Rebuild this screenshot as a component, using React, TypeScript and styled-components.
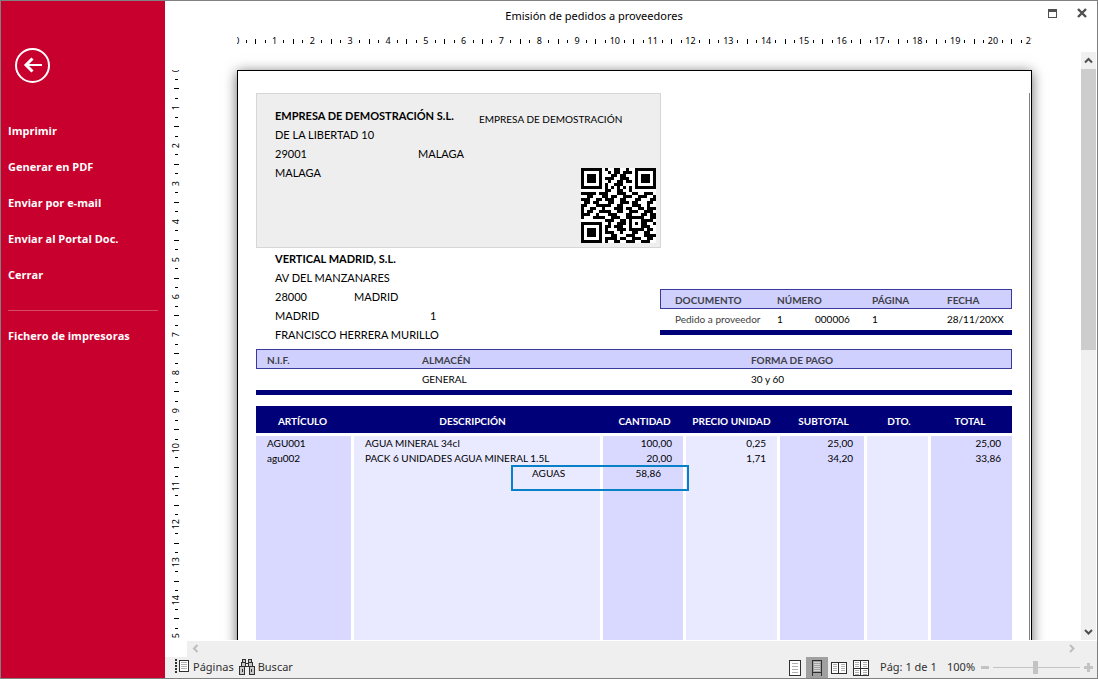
import React from "react";
import styled, { createGlobalStyle } from "styled-components";

const UI = '"Noto Sans", "Open Sans", sans-serif';
const DOC = 'Lato, "Open Sans", sans-serif';
const NAVY = "#000078";

const Global = createGlobalStyle`
  * { box-sizing: border-box; }
  body { margin: 0; background: #fff; font-family: ${UI}; font-size: 11px; color: #000; }
  button { font: inherit; color: inherit; border: 0; padding: 0; background: none; cursor: pointer; }
`;

const Window = styled.div`
  display: flex;
  height: 100vh;
  border: 1px solid #808080;
  overflow: hidden;
`;

/* ---------- sidebar ---------- */
const Sidebar = styled.nav`
  flex: 0 0 164px;
  background: #c8002e;
  color: #fff;
  padding: 46px 7px 0 7px;
`;
const BackButton = styled.button`
  display: block;
  width: 36px;
  height: 36px;
  margin: 0 0 29px 7px;
  svg { display: block; }
`;
const MenuItem = styled.button`
  display: block;
  width: 100%;
  height: 36px;
  text-align: left;
  font-weight: 700;
  font-size: 11px;
  font-family: "Open Sans", sans-serif;
  white-space: nowrap;
`;
const Divider = styled.hr`
  border: 0;
  border-top: 1px solid #d84a68;
  margin: 18px 0 6px;
`;

/* ---------- main ---------- */
const Main = styled.main`
  flex: 1;
  min-width: 0;
  display: flex;
  flex-direction: column;
`;
const TitleBar = styled.header`
  display: flex;
  height: 30px;
`;
const Title = styled.h1`
  flex: 1;
  margin: 0;
  font-size: 11px;
  line-height: 30px;
  font-weight: 400;
  text-align: center;
`;
const WindowButtons = styled.div`
  flex: 0 0 74px;
  display: flex;
  justify-content: flex-end;
  align-items: center;
  gap: 20px;
  padding: 0 10px 7px 0;
  button { height: 12px; }
  svg { display: block; }
`;
const HRuler = styled.div`
  height: 21px;
  margin: 0 65px 0 72px;
  overflow: hidden;
`;
const HTrack = styled.div`
  display: flex;
  height: 100%;
  margin: 0 -4px 0 -5px;
`;
const HCell = styled.div`
  flex: 1 1 0;
  width: 0;
  display: flex;
  justify-content: center;
  align-items: center;
  font-size: 9px;
  line-height: 12px;
  span { padding-bottom: 2px; }
`;
const HTick = styled.i<{ $long?: boolean }>`
  flex: none;
  width: 1px;
  height: ${(p) => (p.$long ? 5 : 3)}px;
  background: #000;
`;
const Body = styled.div`
  flex: 1;
  min-height: 0;
  display: flex;
`;
const VRuler = styled.div`
  flex: 0 0 22px;
  margin-top: 18px;
  overflow: hidden;
`;
const VTrack = styled.div`
  display: flex;
  flex-direction: column;
  height: 1126px;
  margin-top: -5px;
`;
const VCell = styled.div`
  flex: 1 1 0;
  height: 0;
  display: flex;
  justify-content: center;
  align-items: center;
  font-size: 9px;
  line-height: 12px;
  span { writing-mode: vertical-rl; transform: rotate(180deg); }
`;
const VTick = styled.i<{ $long?: boolean }>`
  height: 1px;
  width: ${(p) => (p.$long ? 5 : 3)}px;
  background: #000;
`;
const Canvas = styled.div`
  flex: 1;
  min-width: 0;
  overflow: hidden;
  padding: 18px 49px 0 50px;
`;
const VScroll = styled.div`
  flex: 0 0 15px;
  margin-right: 1px;
  display: flex;
  flex-direction: column;
  background: #f0f0f0;
`;
const ScrollButton = styled.button`
  flex: 0 0 17px;
  display: flex;
  align-items: center;
  justify-content: center;
`;
const Thumb = styled.div`
  flex: 0 0 281px;
  margin-bottom: auto;
  background: #cdcdcd;
`;
const HScroll = styled.div`
  flex: 0 0 16px;
  display: flex;
  justify-content: space-between;
  margin: 1px 0 0 22px;
  padding: 0 17px 1px 0;
  background: #efefef;
`;

/* ---------- sheet ---------- */
const Paper = styled.article`
  border: 1px solid #000;
  height: 1123px;
  background: #fff;
  box-shadow: 0 2px 12px rgba(0, 0, 0, 0.6);
  padding: 22px 1px 0 18px;
  font-family: ${DOC};
`;
const Printable = styled.div`
  height: 100%;
  padding-right: 17px;
  border-right: 1px solid #808080;
`;
const Company = styled.section`
  display: flex;
  width: 405px;
  height: 155px;
  padding: 12px 4px 4px 18px;
  border: 1px solid #d6d6d6;
  background: #eeeeee;
`;
const Side = styled.div`
  flex: 1;
  display: flex;
  flex-direction: column;
  justify-content: space-between;
  align-items: flex-end;
  svg { display: block; }
`;
const SideName = styled.div`
  width: 177px;
  font-size: 10px;
  line-height: 27px;
  white-space: nowrap;
`;
const Lines = styled.div`
  width: 200px;
  font-size: 11px;
  line-height: 19px;
  white-space: nowrap;
`;
const Line = styled.div<{ $first?: number; $bold?: boolean }>`
  display: grid;
  grid-template-columns: ${(p) => (p.$first ? `${p.$first}px` : "auto")} 1fr;
  font-weight: ${(p) => (p.$bold ? 700 : 400)};
`;
const Middle = styled.div`
  display: flex;
  justify-content: space-between;
  height: 101px;
  padding-top: 1px;
  > ${Lines} { margin-left: 19px; }
`;
const DocInfo = styled.section`
  width: 352px;
  padding-top: 40px;
`;
const HeadBand = styled.div<{ $cols: string }>`
  display: grid;
  grid-template-columns: ${(p) => p.$cols};
  height: 20px;
  border: 1px solid #3a3a9c;
  background: #d0d0ff;
  color: #404048;
  font-weight: 700;
  font-size: 10px;
  line-height: 20px;
  white-space: nowrap;
`;
const ValueBand = styled.div<{ $cols: string }>`
  display: grid;
  grid-template-columns: ${(p) => p.$cols};
  height: 21px;
  padding: 0 1px;
  font-size: 10px;
  line-height: 20px;
  white-space: nowrap;
`;
const Muted = styled.span`
  color: #404040;
`;
const Rule = styled.div`
  height: 5px;
  background: ${NAVY};
`;
const Terms = styled.section`
  margin-bottom: 11px;
`;
const Items = styled.table`
  width: 100%;
  table-layout: fixed;
  border-collapse: separate;
  border-spacing: 0;
  font-size: 10px;
  line-height: 15px;
  white-space: nowrap;
`;
const Th = styled.th<{ $pad?: number }>`
  height: 30px;
  padding: 4px ${(p) => p.$pad ?? 0}px 0 0;
  background: ${NAVY};
  border-bottom: 3px solid #fff;
  color: #fff;
  font-size: 10px;
  font-weight: 700;
`;
const Td = styled.td<{ $num?: boolean; $dark?: boolean; $indent?: boolean }>`
  height: 15px;
  padding: 0 11px;
  text-align: ${(p) => (p.$num ? "right" : "left")};
  background: ${(p) => (p.$dark ? "#d9d9ff" : "#e9e9ff")};
  border-right: 3px solid #fff;
  &:last-child { border-right: 0; }
  ${(p) => p.$indent && (p.$num ? "padding-right: 22px;" : "padding-left: 178px; position: relative;")}
`;
const Fill = styled.tr`
  td { height: 420px; }
`;
const Highlight = styled.div`
  position: absolute;
  left: 157px;
  top: -1px;
  width: 178px;
  height: 26px;
  border: 2px solid #0880c8;
`;

/* ---------- status bar ---------- */
const Status = styled.footer`
  flex: 0 0 21px;
  display: flex;
  align-items: center;
  background: #efefef;
  color: #303030;
  padding: 0 4px 0 9px;
  white-space: nowrap;
  svg { display: block; flex: none; }
`;
const StatusButton = styled.button`
  display: flex;
  align-items: center;
  gap: 3px;
  margin-right: 5px;
  padding-bottom: 2px;
`;
const Spacer = styled.div`
  flex: 1;
`;
const ViewButton = styled.button<{ $on?: boolean }>`
  width: 22px;
  height: 21px;
  display: flex;
  align-items: center;
  justify-content: center;
  background: ${(p) => (p.$on ? "#a0a0a0" : "none")};
`;
const StatusText = styled.span<{ $w: number }>`
  width: ${(p) => p.$w}px;
  padding-bottom: 2px;
`;
const PageCount = styled(StatusText)`
  padding-left: 8px;
`;
const Zoom = styled.input`
  appearance: none;
  width: 87px;
  height: 14px;
  margin: 0 4px;
  background: linear-gradient(#c3c3c3, #c3c3c3) center / 100% 1px no-repeat;
  &::-webkit-slider-thumb {
    appearance: none;
    width: 5px;
    height: 13px;
    background: #c3c3c3;
  }
`;

const QR_ROWS = [
  "1111111010011001001111111",
  "1000001001011011101000001",
  "1011101000110110001011101",
  "1011101011100111001011101",
  "1011101001001101101011101",
  "1000001010011100001000001",
  "1111111010101010101111111",
  "0000000011001100100000000",
  "1111101110001110011001110",
  "0011000110110011100111001",
  "1110011011100110001100011",
  "0110110001100111011000110",
  "1100011111001100011100100",
  "1001100100011101100110111",
  "1011001111001100111001110",
  "1110010001110001100011011",
  "1000111100111001111110011",
  "0000000011100110100011110",
  "1111111001001110101011001",
  "1000001011011100100011100",
  "1011101010001110111110110",
  "1011101011100100011001100",
  "1011101000110001110001111",
  "1000001011110110011100110",
  "1111111010011001110011100",
];
const QrCode = () => (
  <svg width="75" height="75" viewBox="0 0 25 25" shapeRendering="crispEdges" aria-label="QR">
    <rect width="25" height="25" fill="#fff" />
    {QR_ROWS.map((row, y) =>
      [...row].map((c, x) => (c === "1" ? <rect key={`${x}-${y}`} x={x} y={y} width="1" height="1" /> : null))
    )}
  </svg>
);

const Chevron = ({ d, color = "#505050" }: { d: string; color?: string }) => (
  <svg width="9" height="9" viewBox="0 0 9 9">
    <path d={d} fill="none" stroke={color} strokeWidth="2" />
  </svg>
);

const PageLines = ({ x, y, w, n }: { x: number; y: number; w: number; n: number }) => (
  <path
    d={Array.from({ length: n }, (_, i) => `M${x} ${y + i * 2 + 0.5}h${w}`).join("")}
    stroke="#b0b0b0"
    fill="none"
  />
);
const PAGE = { fill: "#fff", stroke: "#303030" };

const ticks = Array.from({ length: 85 }, (_, i) => i);
const vticks = Array.from({ length: 119 }, (_, i) => i);
const menu = ["Imprimir", "Generar en PDF", "Enviar por e-mail", "Enviar al Portal Doc.", "Cerrar"];
const headings: [string, number?][] = [
  ["ARTÍCULO", 5],
  ["DESCRIPCIÓN", 12],
  ["CANTIDAD"],
  ["PRECIO UNIDAD", 3],
  ["SUBTOTAL"],
  ["DTO."],
  ["TOTAL", 3],
];
const rows = [
  ["AGU001", "AGUA MINERAL 34cl", "100,00", "0,25", "25,00", "", "25,00"],
  ["agu002", "PACK 6 UNIDADES AGUA MINERAL 1.5L", "20,00", "1,71", "34,20", "", "33,86"],
];

export default function App() {
  return (
    <>
      <Global />
      <Window>
        <Sidebar>
          <BackButton aria-label="Volver">
            <svg width="36" height="36" viewBox="0 0 36 36" fill="none" stroke="#fff">
              <circle cx="17.5" cy="18.5" r="16.5" strokeWidth="2" />
              <path d="M10.5 18H27" strokeWidth="2" />
              <path d="M17.5 11.5L11 18L17.5 24.5" strokeWidth="3" />
            </svg>
          </BackButton>
          {menu.map((m) => (
            <MenuItem key={m}>{m}</MenuItem>
          ))}
          <Divider />
          <MenuItem>Fichero de impresoras</MenuItem>
        </Sidebar>

        <Main>
          <TitleBar>
            <Title>Emisión de pedidos a proveedores</Title>
            <WindowButtons>
              <button aria-label="Maximizar">
                <svg width="9" height="12" viewBox="0 0 9 12" shapeRendering="crispEdges">
                  <path d="M0.5 2V10.5H8.5V2" fill="none" stroke="#505050" />
                  <rect y="2" width="9" height="3" fill="#505050" />
                </svg>
              </button>
              <button aria-label="Cerrar ventana">
                <svg width="10" height="12" viewBox="0 0 10 12">
                  <path d="M1 2L9 10M9 2L1 10" stroke="#505050" strokeWidth="2.4" />
                </svg>
              </button>
            </WindowButtons>
          </TitleBar>

          <HRuler>
            <HTrack>
              {ticks.map((i) => (
                <HCell key={i}>{i % 4 === 0 ? <span>{i / 4}</span> : <HTick $long={i % 4 === 2} />}</HCell>
              ))}
            </HTrack>
          </HRuler>

          <Body>
            <VRuler>
              <VTrack>
                {vticks.map((i) => (
                  <VCell key={i}>{i % 4 === 0 ? <span>{i / 4}</span> : <VTick $long={i % 4 === 2} />}</VCell>
                ))}
              </VTrack>
            </VRuler>

            <Canvas>
              <Paper>
                <Printable>
                  <Company>
                    <Lines>
                      <Line $bold>EMPRESA DE DEMOSTRACIÓN S.L.</Line>
                      <Line>DE LA LIBERTAD 10</Line>
                      <Line $first={143}>
                        <span>29001</span>
                        <span>MALAGA</span>
                      </Line>
                      <Line>MALAGA</Line>
                    </Lines>
                    <Side>
                      <SideName>EMPRESA DE DEMOSTRACIÓN</SideName>
                      <QrCode />
                    </Side>
                  </Company>

                  <Middle>
                    <Lines>
                      <Line $bold>VERTICAL MADRID, S.L.</Line>
                      <Line>AV DEL MANZANARES</Line>
                      <Line $first={79}>
                        <span>28000</span>
                        <span>MADRID</span>
                      </Line>
                      <Line $first={155}>
                        <span>MADRID</span>
                        <span>1</span>
                      </Line>
                      <Line>FRANCISCO HERRERA MURILLO</Line>
                    </Lines>
                    <DocInfo>
                      <HeadBand $cols="14px 102px 95px 75px 1fr">
                        <span />
                        <span>DOCUMENTO</span>
                        <span>NÚMERO</span>
                        <span>PÁGINA</span>
                        <span>FECHA</span>
                      </HeadBand>
                      <ValueBand $cols="14px 102px 38px 57px 75px 1fr">
                        <span />
                        <Muted>Pedido a proveedor</Muted>
                        <span>1</span>
                        <span>000006</span>
                        <span>1</span>
                        <span>28/11/20XX</span>
                      </ValueBand>
                      <Rule />
                    </DocInfo>
                  </Middle>

                  <Terms>
                    <HeadBand $cols="10px 155px 329px 1fr">
                      <span />
                      <span>N.I.F.</span>
                      <span>ALMACÉN</span>
                      <span>FORMA DE PAGO</span>
                    </HeadBand>
                    <ValueBand $cols="165px 329px 1fr">
                      <span />
                      <span>GENERAL</span>
                      <span>30 y 60</span>
                    </ValueBand>
                    <Rule />
                  </Terms>

                  <Items>
                    <colgroup>
                      <col width="98" />
                      <col />
                      <col width="83" />
                      <col width="94" />
                      <col width="87" />
                      <col width="64" />
                      <col width="81" />
                    </colgroup>
                    <thead>
                      <tr>
                        {headings.map(([h, pad]) => (
                          <Th key={h} $pad={pad}>
                            {h}
                          </Th>
                        ))}
                      </tr>
                    </thead>
                    <tbody>
                      {rows.map((r) => (
                        <tr key={r[0]}>
                          {r.map((c, i) => (
                            <Td key={i} $num={i > 1} $dark={i % 2 === 0}>
                              {c}
                            </Td>
                          ))}
                        </tr>
                      ))}
                      <tr>
                        <Td $dark />
                        <Td $indent>
                          AGUAS
                          <Highlight />
                        </Td>
                        <Td $dark $num $indent>
                          58,86
                        </Td>
                        <Td />
                        <Td $dark />
                        <Td />
                        <Td $dark />
                      </tr>
                      <Fill>
                        {headings.map(([h], i) => (
                          <Td key={h} $dark={i % 2 === 0} />
                        ))}
                      </Fill>
                    </tbody>
                  </Items>
                </Printable>
              </Paper>
            </Canvas>

            <VScroll>
              <ScrollButton aria-label="Subir">
                <Chevron d="M1 6.5L4.5 3L8 6.5" />
              </ScrollButton>
              <Thumb />
              <ScrollButton aria-label="Bajar">
                <Chevron d="M1 3L4.5 6.5L8 3" />
              </ScrollButton>
            </VScroll>
          </Body>

          <HScroll>
            <ScrollButton aria-label="Izquierda">
              <Chevron d="M6.5 1L3 4.5L6.5 8" color="#bdbdbd" />
            </ScrollButton>
            <ScrollButton aria-label="Derecha">
              <Chevron d="M3 1L6.5 4.5L3 8" color="#bdbdbd" />
            </ScrollButton>
          </HScroll>

          <Status>
            <StatusButton>
              <svg width="16" height="15" viewBox="0 0 16 15" shapeRendering="crispEdges">
                <path d="M2 0V15" stroke="#303030" strokeWidth="2" strokeDasharray="2 1" />
                <rect x="5.5" y="1.5" width="9" height="11" {...PAGE} />
                <PageLines x={7} y={3} w={6} n={4} />
              </svg>
              Páginas
            </StatusButton>
            <StatusButton>
              <svg width="16" height="16" viewBox="0 0 16 16" shapeRendering="crispEdges" fill="#c8c8c8" stroke="#303030">
                <rect x="3.5" y="0.5" width="3" height="3" />
                <rect x="9.5" y="0.5" width="3" height="3" />
                <rect x="2.5" y="3.5" width="4" height="4" />
                <rect x="9.5" y="3.5" width="4" height="4" />
                <path d="M6.5 4.5H9.5" />
                <rect x="0.5" y="7.5" width="5" height="8" />
                <rect x="10.5" y="7.5" width="5" height="8" />
                <path d="M3.5 10V13M12.5 10V13M6 7.5H10" />
              </svg>
              Buscar
            </StatusButton>
            <Spacer />
            <ViewButton aria-label="Página completa">
              <svg width="12" height="16" viewBox="0 0 12 16" shapeRendering="crispEdges">
                <rect x="0.5" y="0.5" width="11" height="15" {...PAGE} />
                <path d="M3 3.5h6M3 6.5h6M3 9.5h6M3 12.5h6" stroke="#b0b0b0" />
              </svg>
            </ViewButton>
            <ViewButton $on aria-label="Ancho de página">
              <svg width="10" height="16" viewBox="0 0 10 16" shapeRendering="crispEdges">
                <path d="M0.5 16V0.5H9.5V16M0.5 12.5H9.5" fill="none" stroke="#303030" />
                <path d="M2 2.5h6M2 4.5h6M2 6.5h6M2 8.5h6M2 10.5h6" stroke="#d8d8d8" />
              </svg>
            </ViewButton>
            <ViewButton aria-label="Dos páginas">
              <svg width="16" height="12" viewBox="0 0 16 12" shapeRendering="crispEdges">
                <rect x="0.5" y="0.5" width="15" height="11" {...PAGE} />
                <path d="M7.5 0V12" stroke="#303030" />
                <PageLines x={2} y={2} w={4} n={4} />
                <PageLines x={10} y={2} w={4} n={4} />
              </svg>
            </ViewButton>
            <ViewButton aria-label="Cuatro páginas">
              <svg width="16" height="16" viewBox="0 0 16 16" shapeRendering="crispEdges">
                <rect x="0.5" y="0.5" width="15" height="15" {...PAGE} />
                <PageLines x={2} y={2} w={4} n={3} />
                <PageLines x={10} y={2} w={4} n={3} />
                <PageLines x={2} y={10} w={4} n={3} />
                <PageLines x={10} y={10} w={4} n={3} />
                <path d="M7.5 0V16M0 8.5H16" stroke="#303030" />
              </svg>
            </ViewButton>
            <PageCount $w={75}>Pág: 1 de 1</PageCount>
            <StatusText $w={34}>100%</StatusText>
            <button aria-label="Alejar">
              <svg width="8" height="9" viewBox="0 0 8 9" shapeRendering="crispEdges">
                <rect y="3" width="8" height="3" fill="#c3c3c3" />
              </svg>
            </button>
            <Zoom type="range" min={0} max={100} defaultValue={49} aria-label="Zoom" />
            <button aria-label="Acercar">
              <svg width="9" height="9" viewBox="0 0 9 9" shapeRendering="crispEdges">
                <path d="M0 3h3V0h3v3h3v3H6v3H3V6H0z" fill="#c3c3c3" />
              </svg>
            </button>
          </Status>
        </Main>
      </Window>
    </>
  );
}
